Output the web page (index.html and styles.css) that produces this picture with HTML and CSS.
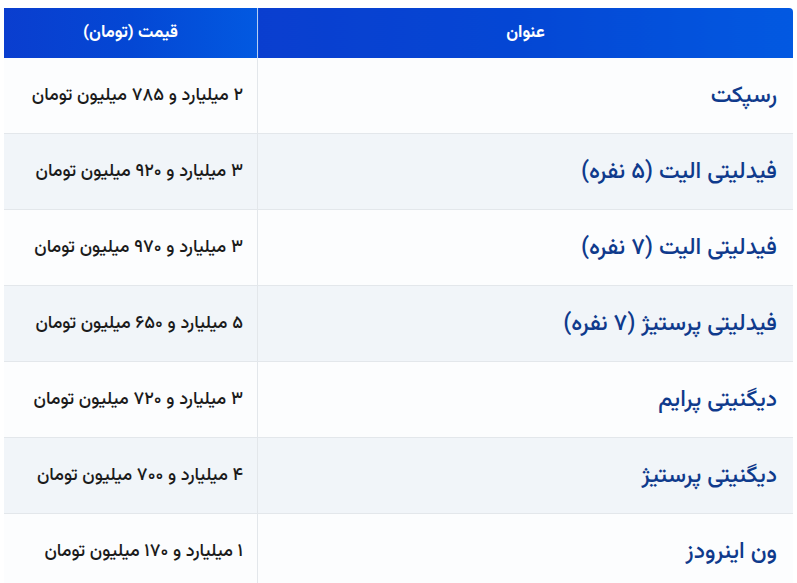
FILE: index.html
```html
<!DOCTYPE html>
<html lang="fa" dir="rtl">
<head>
<meta charset="utf-8">
<link rel="stylesheet" href="styles.css">
</head>
<body>
<div class="wrap">
<table class="price-table">
<thead>
<tr><th class="col-title">عنوان</th><th class="col-price">قیمت (تومان)</th></tr>
</thead>
<tbody>
<tr><td class="name">رسپکت</td><td class="price">۲ میلیارد و ۷۸۵ میلیون تومان</td></tr>
<tr><td class="name">فیدلیتی الیت (۵ نفره)</td><td class="price">۳ میلیارد و ۹۲۰ میلیون تومان</td></tr>
<tr><td class="name">فیدلیتی الیت (۷ نفره)</td><td class="price">۳ میلیارد و ۹۷۰ میلیون تومان</td></tr>
<tr><td class="name">فیدلیتی پرستیژ (۷ نفره)</td><td class="price">۵ میلیارد و ۶۵۰ میلیون تومان</td></tr>
<tr><td class="name">دیگنیتی پرایم</td><td class="price">۳ میلیارد و ۷۲۰ میلیون تومان</td></tr>
<tr><td class="name">دیگنیتی پرستیژ</td><td class="price">۴ میلیارد و ۷۰۰ میلیون تومان</td></tr>
<tr><td class="name">ون اینرودز</td><td class="price">۱ میلیارد و ۱۷۰ میلیون تومان</td></tr>
</tbody>
</table>
</div>
</body>
</html>
```
FILE: styles.css
```css
html, body { margin: 0; padding: 0; background: #ffffff; }
body { font-family: "Vazirmatn", "DejaVu Sans", sans-serif; }
.wrap { padding: 8px 4px 0 5px; }
.price-table {
  width: 788px;
  border-collapse: collapse;
  table-layout: fixed;
}
.price-table th {
  height: 50px;
  padding: 0;
  color: #ffffff;
  font-size: 17px;
  font-weight: bold;
  text-align: center;
  background: linear-gradient(90deg, #0a3ecf 0%, #0447d4 50%, #0259e1 100%);
}
.col-title { width: 535px; border-top-right-radius: 4px; }
.col-price { width: 253px; border-right: 1px solid #b7cdf2; }
.price-table td {
  height: 75px;
  vertical-align: middle;
  border-bottom: 1px solid #e3e7eb;
}
.price-table tbody tr:nth-child(odd) td { background: #fcfdfe; }
.price-table tbody tr:nth-child(even) td { background: #f1f5f9; }
.name {
  padding: 0 16px 0 10px;
  font-size: 23px;
  font-weight: 500;
  color: #0f3a8c;
  text-align: right;
}
.price {
  padding: 0 14px 0 8px;
  font-size: 18px;
  font-weight: 500;
  color: #1b1b1b;
  text-align: right;
  border-right: 1px solid #e3e7eb;
}
```
